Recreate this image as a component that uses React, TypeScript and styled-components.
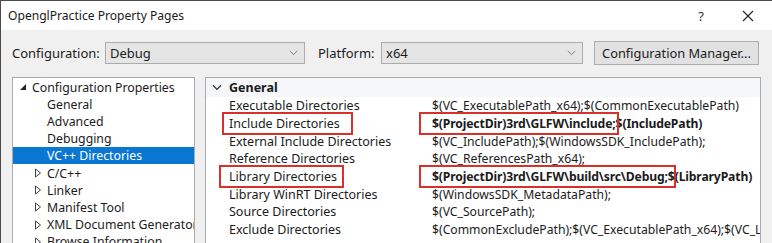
import React from "react";
import styled, { createGlobalStyle } from "styled-components";

const FONT = `"Noto Sans", "Open Sans", sans-serif`;
const TEXT = "#1b1b1b";
const MARK_RED = "#d8312c";
const PANEL_BORDER = "#a9abb1";

type TreeItem = {
  label: string;
  level: 0 | 1;
  arrow?: "open" | "closed";
  selected?: boolean;
};

type PropRow = {
  name: string;
  value: string;
  bold?: boolean;
  /** red annotation boxes: offsets in px relative to the cell */
  nameMark?: { left: number; width: number };
  valueMark?: { left: number; width: number };
};

const treeItems: TreeItem[] = [
  { label: "Configuration Properties", level: 0, arrow: "open" },
  { label: "General", level: 1 },
  { label: "Advanced", level: 1 },
  { label: "Debugging", level: 1 },
  { label: "VC++ Directories", level: 1, selected: true },
  { label: "C/C++", level: 1, arrow: "closed" },
  { label: "Linker", level: 1, arrow: "closed" },
  { label: "Manifest Tool", level: 1, arrow: "closed" },
  { label: "XML Document Generator", level: 1, arrow: "closed" },
  { label: "Browse Information", level: 1, arrow: "closed" },
];

const propRows: PropRow[] = [
  {
    name: "Executable Directories",
    value: "$(VC_ExecutablePath_x64);$(CommonExecutablePath)",
  },
  {
    name: "Include Directories",
    value: "$(ProjectDir)3rd\\GLFW\\include;$(IncludePath)",
    bold: true,
    nameMark: { left: 16, width: 131 },
    valueMark: { left: -13, width: 200 },
  },
  {
    name: "External Include Directories",
    value: "$(VC_IncludePath);$(WindowsSDK_IncludePath);",
  },
  { name: "Reference Directories", value: "$(VC_ReferencesPath_x64);" },
  {
    name: "Library Directories",
    value: "$(ProjectDir)3rd\\GLFW\\build\\src\\Debug;$(LibraryPath)",
    bold: true,
    nameMark: { left: 13, width: 125 },
    valueMark: { left: -13, width: 257 },
  },
  {
    name: "Library WinRT Directories",
    value: "$(WindowsSDK_MetadataPath);",
  },
  { name: "Source Directories", value: "$(VC_SourcePath);" },
  {
    name: "Exclude Directories",
    value:
      "$(CommonExcludePath);$(VC_ExecutablePath_x64);$(VC_LibraryPath_x64)",
  },
];

const GlobalStyle = createGlobalStyle`
  html, body {
    margin: 0;
    padding: 0;
    background: #f0f0f0;
  }
  body {
    font-family: ${FONT};
    color: ${TEXT};
  }
`;

export default function App() {
  return (
    <>
      <GlobalStyle />
      <Window>
        <TitleBar>
          <TitleText>OpenglPractice Property Pages</TitleText>
          <TitleButtons>
            <HelpGlyph>?</HelpGlyph>
            <CloseIcon />
          </TitleButtons>
        </TitleBar>
        <Body>
          <ConfigRow>
            <FieldLabel $width={93}>Configuration:</FieldLabel>
            <Combo $width={200}>
              <span>Debug</span>
              <ChevronDown />
            </Combo>
            <FieldLabel $width={63} $gap={13}>
              Platform:
            </FieldLabel>
            <Combo $width={202}>
              <span>x64</span>
              <ChevronDown />
            </Combo>
            <ManagerButton>Configuration Manager...</ManagerButton>
          </ConfigRow>
          <Panels>
            <TreePanel>
              {treeItems.map((item) => (
                <TreeRow
                  key={item.label}
                  $level={item.level}
                  $selected={!!item.selected}
                >
                  <ArrowSlot>
                    {item.arrow === "open" ? <OpenArrow /> : null}
                    {item.arrow === "closed" ? <ClosedArrow /> : null}
                  </ArrowSlot>
                  <TreeLabel>{item.label}</TreeLabel>
                </TreeRow>
              ))}
            </TreePanel>
            <GridPanel>
              <CategoryRow>
                <CategoryChevron />
                <CategoryLabel>General</CategoryLabel>
              </CategoryRow>
              {propRows.map((row) => (
                <PropLine key={row.name}>
                  <NameCell>
                    {row.name}
                    {row.nameMark ? (
                      <Mark
                        $left={row.nameMark.left}
                        $width={row.nameMark.width}
                      />
                    ) : null}
                  </NameCell>
                  <ValueCell $bold={!!row.bold}>
                    {row.value}
                    {row.valueMark ? (
                      <Mark
                        $left={row.valueMark.left}
                        $width={row.valueMark.width}
                      />
                    ) : null}
                  </ValueCell>
                </PropLine>
              ))}
            </GridPanel>
          </Panels>
        </Body>
      </Window>
    </>
  );
}

const CloseIcon = () => (
  <svg width="12" height="12" viewBox="0 0 12 12">
    <path d="M1 1 L11 11 M11 1 L1 11" stroke="#222" strokeWidth="1.1" />
  </svg>
);

const ChevronDown = () => (
  <svg width="9" height="6" viewBox="0 0 9 6">
    <path d="M0.8 1 L4.5 4.6 L8.2 1" fill="none" stroke="#7a7a7a" strokeWidth="1" />
  </svg>
);

const OpenArrow = () => (
  <svg width="8" height="8" viewBox="0 0 8 8">
    <path d="M7 1 L7 7 L1 7 Z" fill="#262626" />
  </svg>
);

const ClosedArrow = () => (
  <svg width="8" height="10" viewBox="0 0 8 10">
    <path d="M1.5 1 L6.5 5 L1.5 9 Z" fill="none" stroke="#444" strokeWidth="1" />
  </svg>
);

const CategoryChevron = () => (
  <svg width="10" height="7" viewBox="0 0 10 7" style={{ marginLeft: 6 }}>
    <path d="M1 1.2 L5 5.4 L9 1.2" fill="none" stroke="#333" strokeWidth="1.3" />
  </svg>
);

const Window = styled.div`
  width: 772px;
  height: 243px;
  overflow: hidden;
  box-sizing: border-box;
  border-top: 1px solid #4a4a4a;
  border-left: 1px solid #4a4a4a;
  display: flex;
  flex-direction: column;
  background: #f0f0f0;
`;

const TitleBar = styled.div`
  height: 29px;
  flex: none;
  background: #ffffff;
  display: flex;
  align-items: center;
  padding-left: 7px;
`;

const TitleText = styled.div`
  font-size: 12.1px;
  color: #1a1a1a;
  flex: 1;
  white-space: nowrap;
`;

const TitleButtons = styled.div`
  display: flex;
  align-items: center;
  gap: 38px;
  padding-right: 18px;
`;

const HelpGlyph = styled.span`
  font-size: 13px;
  color: #333;
`;

const Body = styled.div`
  flex: 1;
  padding: 11px 0 0 11px;
  display: flex;
  flex-direction: column;
`;

const ConfigRow = styled.div`
  display: flex;
  align-items: center;
  height: 24px;
`;

const FieldLabel = styled.div<{ $width: number; $gap?: number }>`
  width: ${({ $width }) => $width}px;
  margin-left: ${({ $gap }) => $gap ?? 0}px;
  flex: none;
  font-size: 13px;
  white-space: nowrap;
`;

const Combo = styled.div<{ $width: number }>`
  width: ${({ $width }) => $width}px;
  height: 22px;
  box-sizing: border-box;
  flex: none;
  background: #e5e5e5;
  border: 1px solid #acacac;
  display: flex;
  align-items: center;
  justify-content: space-between;
  padding: 0 6px 0 4px;
  font-size: 13px;
`;

const ManagerButton = styled.div`
  margin-left: 11px;
  width: 165px;
  height: 24px;
  box-sizing: border-box;
  flex: none;
  background: #e1e1e1;
  border: 1px solid #adadad;
  display: flex;
  align-items: center;
  justify-content: center;
  font-size: 12.8px;
  white-space: nowrap;
`;

const Panels = styled.div`
  margin-top: 12px;
  flex: 1;
  display: flex;
  align-items: flex-start;
  gap: 10px;
`;

const TreePanel = styled.div`
  width: 183px;
  height: 200px;
  box-sizing: border-box;
  flex: none;
  background: #ffffff;
  border: 1px solid ${PANEL_BORDER};
  padding-top: 0.5px;
  overflow: hidden;
`;

const TreeRow = styled.div<{ $level: 0 | 1; $selected: boolean }>`
  height: 17.2px;
  display: flex;
  align-items: center;
  padding-left: ${({ $level }) => ($level === 0 ? 6 : 21)}px;
  white-space: nowrap;
  background: ${({ $selected }) => ($selected ? "#0a78d2" : "transparent")};
  color: ${({ $selected }) => ($selected ? "#ffffff" : TEXT)};
`;

const ArrowSlot = styled.span`
  width: 13px;
  flex: none;
  display: flex;
  align-items: center;
`;

const TreeLabel = styled.span`
  font-size: 12.3px;
`;

const GridPanel = styled.div`
  width: 556px;
  height: 200px;
  box-sizing: border-box;
  flex: none;
  background: #ffffff;
  border: 1px solid ${PANEL_BORDER};
  overflow: hidden;
`;

const CategoryRow = styled.div`
  height: 19px;
  display: flex;
  align-items: center;
  gap: 7px;
  background: #f5f6f8;
`;

const CategoryLabel = styled.span`
  font-size: 12.5px;
  font-weight: 700;
`;

const PropLine = styled.div`
  height: 17.7px;
  display: grid;
  grid-template-columns: 226px 1fr;
  align-items: center;
  white-space: nowrap;
`;

const NameCell = styled.div`
  position: relative;
  padding-left: 23px;
  height: 100%;
  display: flex;
  align-items: center;
  font-size: 12.5px;
`;

const ValueCell = styled.div<{ $bold: boolean }>`
  position: relative;
  height: 100%;
  display: flex;
  align-items: center;
  font-size: 12.2px;
  font-weight: ${({ $bold }) => ($bold ? 700 : 400)};
  letter-spacing: ${({ $bold }) => ($bold ? "-0.15px" : "0")};
`;

const Mark = styled.span<{ $left: number; $width: number }>`
  position: absolute;
  left: ${({ $left }) => $left}px;
  width: ${({ $width }) => $width}px;
  top: -3px;
  bottom: -3px;
  box-sizing: border-box;
  border: 2px solid ${MARK_RED};
  pointer-events: none;
`;
